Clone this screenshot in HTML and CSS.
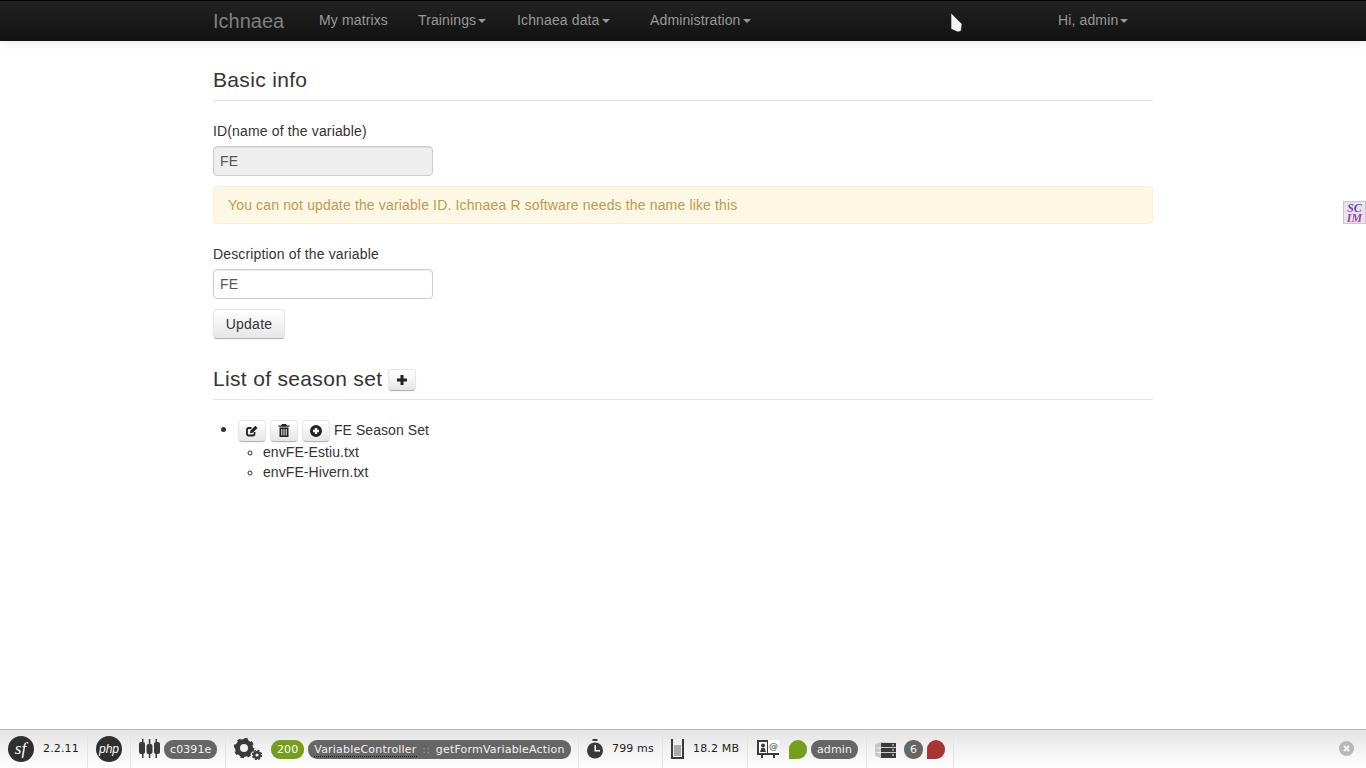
FILE: index.html
```html
<!DOCTYPE html>
<html lang="en">
<head>
    <meta charset="UTF-8">
    <title>Ichnaea</title>
    <link rel="stylesheet" href="styles.css">
</head>
<body>
    <div class="navbar">
        <div class="container nav-inner">
            <a class="brand">Ichnaea</a>
            <a class="nav-link link-matrix">My matrixs</a>
            <a class="nav-link link-train">Trainings<span class="caret"></span></a>
            <a class="nav-link link-data">Ichnaea data<span class="caret"></span></a>
            <a class="nav-link link-admin">Administration<span class="caret"></span></a>
            <a class="nav-link link-user">Hi, admin<span class="caret"></span></a>
        </div>
    </div>

    <div class="container content">
        <h3 class="section-title">Basic info</h3>
        <label class="field-label">ID(name of the variable)</label>
        <div class="input input-disabled">FE</div>
        <div class="alert">You can not update the variable ID. Ichnaea R software needs the name like this</div>
        <label class="field-label">Description of the variable</label>
        <div class="input">FE</div>
        <button class="btn btn-update">Update</button>

        <h3 class="section-title title-list">List of season set
            <button class="btn btn-icon btn-plus">
                <svg width="12" height="12" viewBox="0 0 12 12"><path d="M4.500 1h3v3.500h3.500v3h-3.500v3.500h-3v-3.500h-3.500v-3h3.500z" fill="#222"/></svg>
            </button>
        </h3>
        <ul class="sets">
            <li>
                <button class="btn btn-icon">
                    <svg class="icon-up" width="12" height="12" viewBox="0 0 12 12"><path d="M8.500 7v2a1.500 1.500 0 0 1-1.500 1.500h-4.500a1.500 1.500 0 0 1-1.500-1.500v-4.500a1.500 1.500 0 0 1 1.500-1.500h3" fill="none" stroke="#222" stroke-width="1.800"/><path d="M4 8.200l.5-2.700 4.800-4.800 2.200 2.200-4.800 4.800z" fill="#222"/></svg>
                </button>
                <button class="btn btn-icon">
                    <svg class="icon-up" width="12" height="13" viewBox="0 0 12 13"><path d="M4 0h4l.8 1.500h2.700v1.300h-11v-1.300h2.700z" fill="#222"/><path d="M1.500 3.500h9v9.500h-9zM3.300 5v6.500h1v-6.500zM5.500 5v6.500h1v-6.500zM7.700 5v6.500h1v-6.500z" fill="#222" fill-rule="evenodd"/></svg>
                </button>
                <button class="btn btn-icon">
                    <svg class="icon-up" width="12" height="12" viewBox="0 0 12 12"><path d="M6 0a6 6 0 1 1 0 12a6 6 0 0 1 0-12zM4.800 3v1.800h-1.800v2.400h1.800v1.800h2.400v-1.800h1.800v-2.400h-1.800v-1.800z" fill="#222" fill-rule="evenodd"/></svg>
                </button>
                FE Season Set
                <ul class="files">
                    <li>envFE-Estiu.txt</li>
                    <li>envFE-Hivern.txt</li>
                </ul>
            </li>
        </ul>
    </div>

    <!-- things floating over the page -->
    <svg class="cursor" width="13" height="21" viewBox="0 0 13 21"><path d="M1 1l11 11-1 7-3 1-7-3z" fill="#f4f4f4" stroke="#222" stroke-width=".6"/></svg>
    <div class="scim-badge"><span class="scim-text">SC IM</span></div>

    <div class="toolbar">
        <div class="tb-block tb-sf">
            <svg class="tb-logo" width="26" height="26" viewBox="0 0 26 26"><circle cx="13" cy="13" r="13" fill="#2f2f2f"/><text x="12.500" y="18" text-anchor="middle" class="logo-sf">sf</text></svg>
            <span class="tb-text">2.2.11</span>
        </div>
        <div class="tb-block tb-php">
            <svg width="26" height="26" viewBox="0 0 26 26"><circle cx="13" cy="13" r="13" fill="#2f2f2f"/><text x="13" y="17" text-anchor="middle" class="logo-php">php</text></svg>
        </div>
        <div class="tb-block tb-config">
            <svg width="21" height="20" viewBox="0 0 21 20"><path d="M3 0h1.500v3h-1.500zM3 14h1.500v5h-1.500zM9.800 0h1.500v5h-1.500zM9.800 14h1.500v5h-1.500zM16.500 0h1.500v3h-1.500zM16.500 14h1.500v5h-1.500z" fill="#3a3a3a"/><rect x="0" y="3" width="6" height="12" rx="2" fill="#3a3a3a"/><rect x="7.500" y="5" width="6" height="10" rx="2" fill="#3a3a3a"/><rect x="15" y="3" width="6" height="12" rx="2" fill="#3a3a3a"/></svg>
            <span class="pill">c0391e</span>
        </div>
        <div class="tb-block tb-request">
            <svg width="28" height="22" viewBox="0 0 28 22"><circle cx="10" cy="10" r="6.500" fill="none" stroke="#3a3a3a" stroke-width="5"/><circle cx="10" cy="10" r="9" fill="none" stroke="#3a3a3a" stroke-width="2.500" stroke-dasharray="3.500 3.570"/><circle cx="23" cy="17" r="2.800" fill="none" stroke="#3a3a3a" stroke-width="2.400"/><circle cx="23" cy="17" r="4.500" fill="none" stroke="#3a3a3a" stroke-width="1.400" stroke-dasharray="2 1.530"/></svg>
            <span class="pill pill-green">200</span>
            <span class="pill pill-route"><span class="dotted">VariableController</span> <span class="sep-colons">::</span> getFormVariableAction</span>
        </div>
        <div class="tb-block tb-timer">
            <svg width="18" height="20" viewBox="0 0 18 20"><rect x="6.500" y="0" width="5" height="2" fill="#3a3a3a"/><circle cx="9" cy="11.500" r="8" fill="#3a3a3a"/><path d="M8.500 6h1.500v5h4v1.500h-5.500z" fill="#fff"/></svg>
            <span class="tb-text">799 ms</span>
        </div>
        <div class="tb-block tb-memory">
            <svg width="13" height="20" viewBox="0 0 13 20"><path d="M1 0v19h11v-19" fill="none" stroke="#3a3a3a" stroke-width="2"/><rect x="3" y="6" width="7" height="11" fill="#aaa"/></svg>
            <span class="tb-text">18.2 MB</span>
        </div>
        <div class="tb-block tb-security">
            <svg width="22" height="20" viewBox="0 0 22 20"><rect x="0" y="1" width="22" height="15" fill="#3a3a3a"/><rect x="2" y="3" width="8" height="11" fill="#fff"/><circle cx="6" cy="6.500" r="2" fill="#3a3a3a"/><path d="M3 13l1.500-4h3l1.500 4z" fill="#3a3a3a"/><rect x="11" y="1" width="11" height="13" fill="#fff"/><text x="16.500" y="10" text-anchor="middle" class="logo-at">@</text><rect x="4" y="16" width="2" height="3" fill="#3a3a3a"/><rect x="16" y="16" width="2" height="3" fill="#3a3a3a"/></svg>
            <span class="status-dot dot-green"></span>
            <span class="pill">admin</span>
        </div>
        <div class="tb-block tb-db">
            <svg width="21" height="17" viewBox="0 0 21 17"><path d="M0 3l6-2 15 1v14l-15 1-6-2z" fill="#c8c8c8"/><path d="M0 7l6 1v-2zM0 11.500l6 1v-2z" fill="#f2f2f2"/><rect x="6" y="2" width="15" height="4" fill="#3a3a3a"/><rect x="6" y="7" width="15" height="4" fill="#3a3a3a"/><rect x="6" y="12" width="15" height="5" fill="#3a3a3a"/><rect x="17" y="3.500" width="2" height="1" fill="#fff"/><rect x="17" y="8.500" width="2" height="1" fill="#fff"/><rect x="17" y="13.500" width="2" height="1" fill="#fff"/></svg>
            <span class="pill pill-num">6</span>
            <span class="status-dot dot-red"></span>
        </div>
        <div class="tb-close">
            <svg width="15" height="15" viewBox="0 0 15 15"><circle cx="7.500" cy="7.500" r="7.500" fill="#b8b8b8"/><path d="M5 5l5 5M10 5l-5 5" stroke="#f4f4f4" stroke-width="2.200"/></svg>
        </div>
    </div>
</body>
</html>
```

FILE: styles.css
```css
* {
    box-sizing: border-box;
}
body {
    margin: 0;
    height: 768px;
    overflow: hidden;
    position: relative;
    font-family: "Liberation Sans", Arial, sans-serif;
    font-size: 14px;
    line-height: 20px;
    color: #333;
    background-color: #fff;
}
.container {
    width: 940px;
    margin-left: 213px;
}

/* navbar */
.navbar {
    height: 41px;
    border-top: 1px solid #000;
    background: linear-gradient(to bottom, #222, #111);
    box-shadow: 0 1px 10px rgba(0, 0, 0, .1);
}
.nav-inner {
    display: flex;
    align-items: center;
    height: 40px;
    color: #999;
}
.brand {
    font-size: 20px;
    color: #808080;
    width: 106px;
    margin-top: -1px;
}
.nav-link {
    color: #999;
    margin-top: -3px;
    letter-spacing: .13px;
}
.link-matrix { width: 99px; }
.link-train { width: 99px; }
.link-data { width: 133px; }
.link-admin { width: 408px; }
.caret {
    display: inline-block;
    width: 0;
    height: 0;
    margin-left: 2px;
    vertical-align: middle;
    border-top: 4px solid #999;
    border-left: 4px solid transparent;
    border-right: 4px solid transparent;
}

/* content */
.content {
    letter-spacing: .15px;
}
.section-title {
    margin: 0;
    font-size: 21px;
    font-weight: normal;
    line-height: 30px;
    color: #333;
    letter-spacing: .33px;
    padding-top: 24px;
    padding-bottom: 5px;
    border-bottom: 1px solid #e5e5e5;
    margin-bottom: 20px;
}
.title-list {
    padding-top: 25px;
    padding-bottom: 5px;
    margin-bottom: 20px;
}
.field-label {
    display: block;
    margin-bottom: 5px;
}
.input {
    width: 220px;
    height: 30px;
    padding: 4px 6px;
    color: #555;
    border: 1px solid #ccc;
    border-radius: 4px;
    box-shadow: inset 0 1px 1px rgba(0, 0, 0, .075);
    margin-bottom: 10px;
}
.input-disabled {
    background-color: #eee;
}
.alert {
    height: 38px;
    padding: 8px 14px;
    color: #c09853;
    background-color: #fcf8e3;
    border: 1px solid #fbeed5;
    border-radius: 4px;
    margin-bottom: 20px;
}
.btn {
    font-family: inherit;
    font-size: 14px;
    line-height: 20px;
    color: #333;
    padding: 4px 12px;
    border: 1px solid #ccc;
    border-color: #e6e6e6 #e6e6e6 #b3b3b3;
    border-radius: 4px;
    background: linear-gradient(to bottom, #fff, #e6e6e6);
    box-shadow: inset 0 1px 0 rgba(255, 255, 255, .2), 0 1px 2px rgba(0, 0, 0, .05);
}
.btn-update {
    display: block;
    width: 72px;
    height: 30px;
    padding: 4px 0;
    text-align: center;
    letter-spacing: .25px;
}
.btn-icon {
    display: inline-flex;
    align-items: center;
    justify-content: center;
    width: 28px;
    height: 22px;
    padding: 0;
    vertical-align: middle;
}
.icon-up {
    margin-top: -1px;
}
.btn-plus {
    margin-left: -1px;
}
.sets {
    margin: 0;
    padding-left: 25px;
    letter-spacing: .07px;
}
.sets > li {
    line-height: 20px;
}
.sets > li::marker {
    font-size: 17px;
}
.files {
    margin: 0;
    padding-left: 25px;
    list-style-type: circle;
}

/* cursor + badge */
.cursor {
    position: absolute;
    left: 950px;
    top: 12px;
}
.scim-badge {
    position: absolute;
    left: 1343px;
    top: 201px;
    width: 23px;
    height: 23px;
    padding-top: 1px;
    display: flex;
    justify-content: center;
    background-color: #e8e4ea;
    border: 1px solid #c8c8c8;
}
.scim-text {
    width: 16px;
    height: 20px;
    font-family: "Liberation Serif", serif;
    font-size: 12px;
    font-weight: bold;
    font-style: italic;
    line-height: 10px;
    text-align: center;
    color: transparent;
    background: linear-gradient(to bottom, #4a48b8, #b8389a);
    -webkit-background-clip: text;
    background-clip: text;
}

/* debug toolbar */
.toolbar {
    position: absolute;
    left: 0;
    right: 0;
    bottom: 0;
    height: 39px;
    display: flex;
    border-top: 1px solid #bbb;
    background: linear-gradient(to bottom, #e4e4e4, #fff);
    font-family: "DejaVu Sans", sans-serif;
    font-size: 11px;
    color: #2f2f2f;
}
.tb-block {
    height: 38px;
    display: flex;
    align-items: center;
    padding-left: 8px;
    border-right: 1px solid #e4e4e4;
}
.tb-sf { width: 88px; }
.tb-sf .tb-text { margin-left: 9px; letter-spacing: .15px; }
.tb-php { width: 43px; }
.tb-config { width: 95px; }
.tb-request { width: 353px; }
.tb-timer { width: 84px; padding-left: 7px; }
.tb-memory { width: 85px; padding-left: 8px; }
.tb-memory .tb-text { margin-left: 9px; letter-spacing: .15px; }
.tb-timer .tb-text { letter-spacing: .15px; }
.tb-security { width: 119px; padding-left: 9px; }
.tb-db { width: 87px; }
.tb-text { margin-left: 8px; color: #222; }
.pill {
    display: inline-block;
    height: 19px;
    line-height: 19px;
    padding: 0 6px;
    margin-left: 4px;
    border-radius: 9px;
    background-color: #666;
    color: #f2f2f2;
    letter-spacing: .1px;
    white-space: nowrap;
}
.pill-green {
    background-color: #759e1a;
    color: #fff;
    margin-left: 9px;
}
.pill-route {
    letter-spacing: .2px;
    margin-left: 4px;
}
.pill-num {
    padding: 0;
    width: 19px;
    text-align: center;
    margin-left: 8px;
}
.dotted {
    border-bottom: 1px dotted #111;
}
.sep-colons {
    color: #999;
    margin: 0 2px;
}
.status-dot {
    display: inline-block;
    width: 18px;
    height: 19px;
    border-radius: 9px 9px 9px 0;
}
.dot-green {
    background-color: #759e1a;
    margin-left: 10px;
}
.dot-red {
    background-color: #a33;
    margin-left: 4px;
}
.logo-sf {
    font-family: "Liberation Serif", serif;
    font-style: italic;
    font-size: 17px;
    fill: #fff;
}
.logo-php {
    font-family: "Liberation Sans", sans-serif;
    font-style: italic;
    font-size: 12px;
    fill: #fff;
}
.logo-at {
    font-family: "DejaVu Sans", sans-serif;
    font-size: 9px;
    fill: #3a3a3a;
}
.tb-close {
    margin-left: auto;
    width: 27px;
    padding-top: 11px;
}
```
